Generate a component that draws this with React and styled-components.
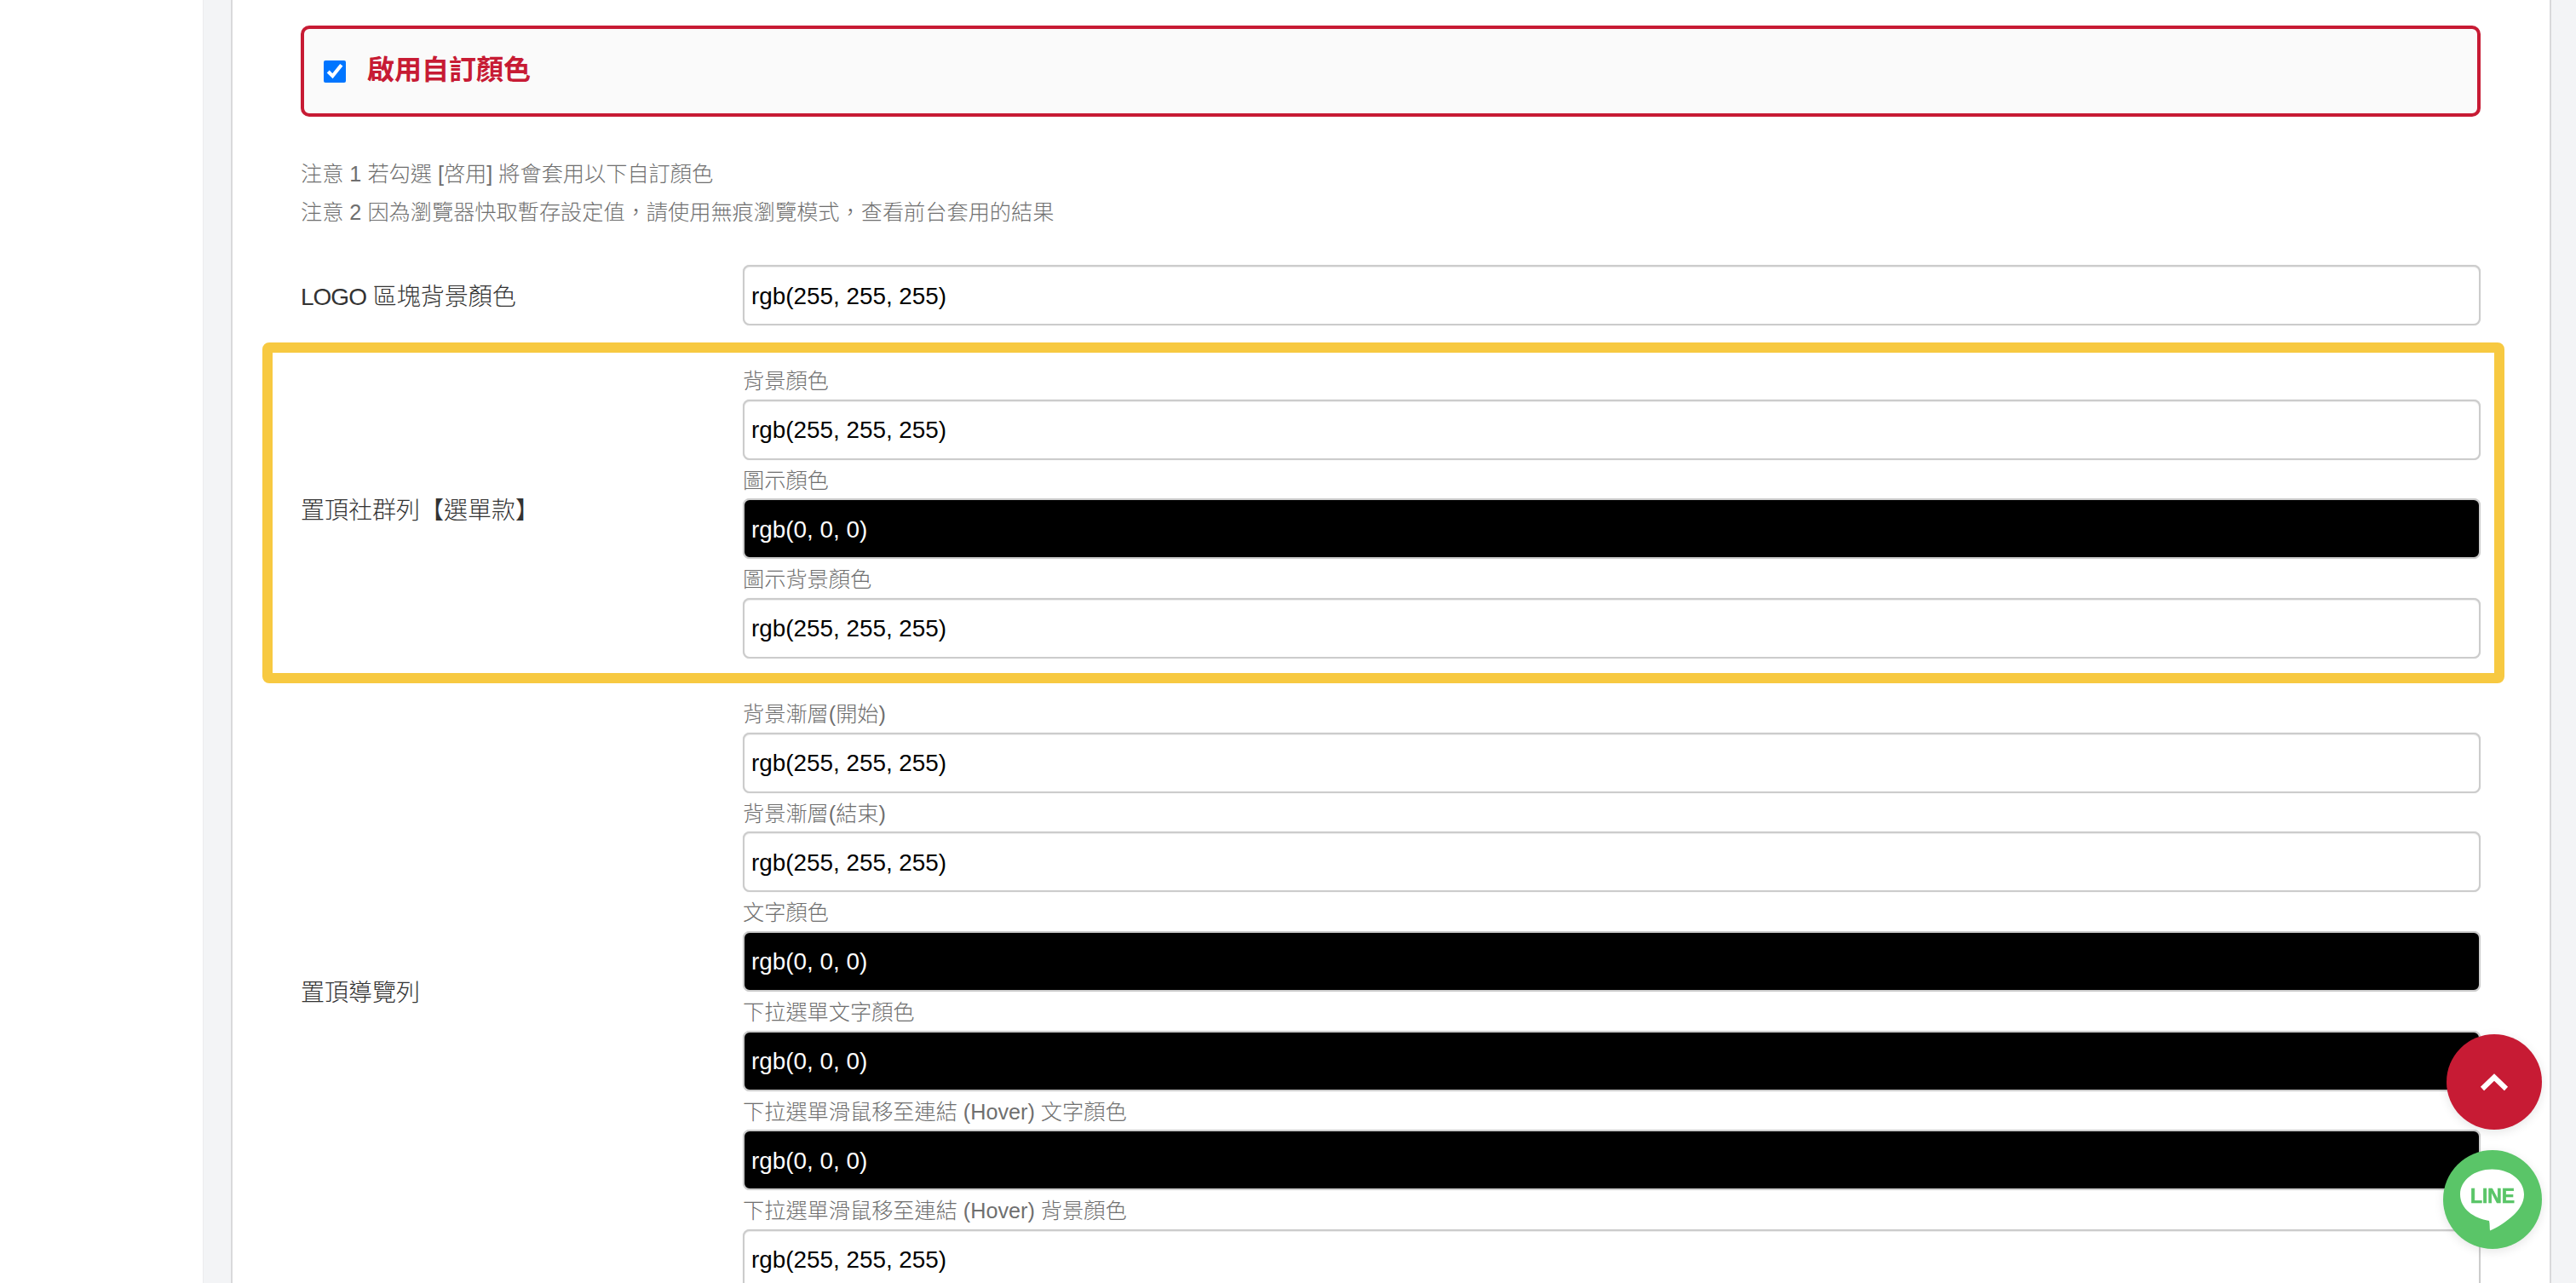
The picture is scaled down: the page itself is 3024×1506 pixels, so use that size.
import React from "react";
import styled, { createGlobalStyle } from "styled-components";

const Global = createGlobalStyle`
  html, body { margin: 0; padding: 0; height: 100%; overflow: hidden; background: #fff; }
  * { box-sizing: border-box; }
  body { font-family: "Liberation Sans", "Noto Sans CJK TC", sans-serif; }
`;

const Page = styled.div`
  display: flex;
  height: 1506px;
  overflow: hidden;
`;
const LeftBlank = styled.div`
  width: 238px;
  flex: none;
  background: #fff;
`;
const Main = styled.main`
  flex: 1;
  min-width: 0;
  background: #f3f4f6;
  border-left: 1px solid #ececee;
  padding: 0 29px 0 32px;
`;
const Card = styled.section`
  background: #fff;
  border-left: 2px solid #d9d9db;
  border-right: 2px solid #d9d9db;
  padding: 30px 81px 0 80px;
  min-height: 100%;
`;
const EnableBox = styled.label`
  display: flex;
  align-items: center;
  gap: 25px;
  height: 107px;
  padding-left: 23px;
  background: #fafafa;
  border: 4px solid #c71b34;
  border-radius: 10px;
`;
const Check = styled.input`
  width: 26px;
  height: 26px;
  margin: 0;
  accent-color: #0075ff;
`;
const EnableText = styled.span`
  font-size: 32px;
  font-weight: 700;
  line-height: 40px;
  padding-bottom: 4px;
  color: #c71b34;
`;
const Notes = styled.div`
  margin: 45px 0 39px;
  font-size: 25.2px;
  line-height: 45px;
  font-weight: 300;
  color: #6f6f6f;
`;
const Row = styled.div`
  position: relative;
  display: flex;
  align-items: center;
  margin-bottom: 41px;
  &::after {
    content: "";
    display: ${(p) => (p.$highlight ? "block" : "none")};
    position: absolute;
    inset: -21px -28px -29px -45px;
    border: 12px solid #f7c941;
    border-radius: 8px;
    pointer-events: none;
  }
`;
const RowLabel = styled.div`
  width: 519px;
  flex: none;
  font-size: 28px;
  font-weight: 300;
  padding-bottom: 2px;
  color: #333;
`;
const LatinWord = styled.span`
  letter-spacing: -1px;
`;
const Fields = styled.div`
  flex: 1;
  min-width: 0;
`;
const Field = styled.div`
  height: 116.67px;
  display: flex;
  flex-direction: column;
`;
const FieldLabel = styled.div`
  height: 45.67px;
  font-size: 25.2px;
  font-weight: 300;
  line-height: 45.67px;
  padding-top: 2px;
  color: #6f6f6f;
`;
const ColorInput = styled.input`
  width: 100%;
  height: 71px;
  flex: none;
  padding: 2px 8px 0;
  margin: 0;
  font-family: inherit;
  font-size: 27.85px;
  border: 2px solid #ccc;
  border-radius: 8px;
  outline: none;
  box-shadow: inset 0 1px 1px rgba(0, 0, 0, 0.075), 0 0 1px #ccc;
  background: ${(p) => (p.$dark ? "#000" : "#fff")};
  color: ${(p) => (p.$dark ? "#fff" : "#000")};
`;
const Fab = styled.a`
  position: fixed;
  right: 40px;
  border-radius: 50%;
  display: flex;
  align-items: center;
  justify-content: center;
  box-shadow: 0 3px 12px rgba(0, 0, 0, 0.1);
  top: ${(p) => p.$top}px;
  width: ${(p) => p.$size}px;
  height: ${(p) => p.$size}px;
  background: ${(p) => p.$bg};
`;
const LogoText = styled.text`
  font-family: "Liberation Sans", sans-serif;
  font-weight: 700;
  font-size: 24px;
  fill: #5ac568;
  stroke: #5ac568;
  stroke-width: 0.7px;
`;

const W = "rgb(255, 255, 255)";
const K = "rgb(0, 0, 0)";

function ColorField({ label, value }) {
  return (
    <Field>
      <FieldLabel>{label}</FieldLabel>
      <ColorInput type="text" readOnly value={value} $dark={value === K} />
    </Field>
  );
}

const social = [
  ["背景顏色", W],
  ["圖示顏色", K],
  ["圖示背景顏色", W],
];
const nav = [
  ["背景漸層(開始)", W],
  ["背景漸層(結束)", W],
  ["文字顏色", K],
  ["下拉選單文字顏色", K],
  ["下拉選單滑鼠移至連結 (Hover) 文字顏色", K],
  ["下拉選單滑鼠移至連結 (Hover) 背景顏色", W],
];

export default function App() {
  return (
    <>
      <Global />
      <Page>
        <LeftBlank />
        <Main>
          <Card>
            <EnableBox>
              <Check type="checkbox" defaultChecked />
              <EnableText>啟用自訂顏色</EnableText>
            </EnableBox>
            <Notes>
              <div>注意 1 若勾選 [啓用] 將會套用以下自訂顏色</div>
              <div>注意 2 因為瀏覽器快取暫存設定值，請使用無痕瀏覽模式，查看前台套用的結果</div>
            </Notes>
            <Row>
              <RowLabel><LatinWord>LOGO</LatinWord> 區塊背景顏色</RowLabel>
              <Fields>
                <ColorInput type="text" readOnly value={W} />
              </Fields>
            </Row>
            <Row $highlight>
              <RowLabel>置頂社群列【選單款】</RowLabel>
              <Fields>
                {social.map(([l, v]) => (
                  <ColorField key={l} label={l} value={v} />
                ))}
              </Fields>
            </Row>
            <Row>
              <RowLabel>置頂導覽列</RowLabel>
              <Fields>
                {nav.map(([l, v]) => (
                  <ColorField key={l} label={l} value={v} />
                ))}
              </Fields>
            </Row>
          </Card>
        </Main>
      </Page>
      <Fab $top={1214} $size={112} $bg="#c71b34" aria-label="top">
        <svg width="112" height="112" viewBox="0 0 112 112" fill="none">
          <path d="M42 64 L56 50.5 L70 64" stroke="#fff" strokeWidth="6" strokeLinejoin="miter" />
        </svg>
      </Fab>
      <Fab $top={1350} $size={116} $bg="#5ac568" aria-label="LINE">
        <svg width="116" height="116" viewBox="0 0 116 116">
          <path
            d="M57.5 22.5 C78 22.5 95 35 95 52 C95 62 89 70 83 76 C74 84 64 91 55 94.5 C54.5 91 55 87 54 83 C36 80 20 69 20 52 C20 35 37 22.5 57.5 22.5 Z"
            fill="#fff"
          />
          <LogoText x="32" y="62" textLength="52" lengthAdjust="spacingAndGlyphs">LINE</LogoText>
        </svg>
      </Fab>
    </>
  );
}
